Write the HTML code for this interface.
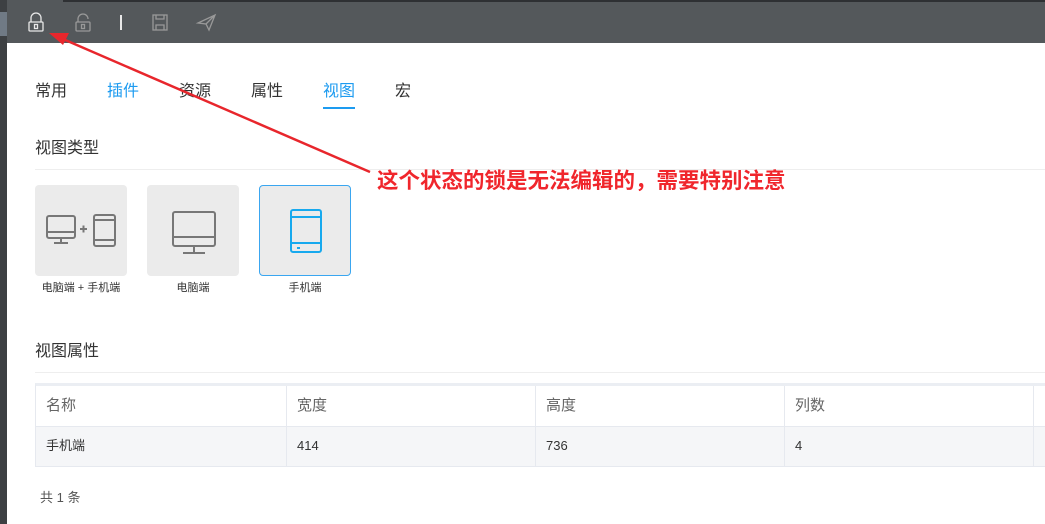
<!DOCTYPE html>
<html><head><meta charset="utf-8"><style>
*{margin:0;padding:0;box-sizing:border-box}
body{width:1045px;height:524px;overflow:hidden;background:#fff;font-family:"Liberation Sans","Noto Sans CJK SC",sans-serif;position:relative;color:#333}
.abs{position:absolute}
.tab{position:absolute;top:82px;font-size:16px;line-height:20px;color:#333}
.card{position:absolute;top:185px;width:92px;height:91px;background:#ebebeb;border-radius:4px}
.lbl{position:absolute;top:279px;font-size:11px;color:#333;width:120px;text-align:center}
.th,.td{position:absolute;font-size:15px;line-height:20px;color:#666}
.td{font-size:13px;color:#333}
</style></head><body>
<div class="abs" style="left:0;top:0;width:1045px;height:43px;background:#54585b"></div>
<div class="abs" style="left:63px;top:0;width:982px;height:2px;background:#2e3033"></div>
<div class="abs" style="left:0;top:0;width:7px;height:524px;background:#3d4043"></div>
<div class="abs" style="left:0;top:12px;width:7px;height:24px;background:#707a85"></div>
<svg class="abs" style="left:0;top:0" width="240" height="43" fill="none">
<g stroke="#e8e8e8" stroke-width="1.3"><path d="M31 22v-4a5 5 0 0 1 10 0v4"/><rect x="29" y="22" width="14" height="9" rx="1"/><rect x="34.5" y="24.5" width="3" height="4"/></g>
<g stroke="#999" stroke-width="1.3"><path d="M78 22v-3a5 5 0 0 1 10 0"/><rect x="76" y="22" width="14" height="9" rx="1"/><rect x="81.5" y="24.5" width="3" height="4"/>
<rect x="153" y="15" width="14" height="15"/><path d="M156 15v4h8v-4M156 30v-5h8v5"/><path d="M198 23l17-8-6 15-3-6z M206 24l9-9"/></g>
<rect x="120" y="15" width="2" height="15" fill="#e8e8e8"/>
</svg>
<div class="tab" style="left:35px">常用</div>
<div class="tab" style="left:107px;color:#1d9bf0">插件</div>
<div class="tab" style="left:179px">资源</div>
<div class="tab" style="left:251px">属性</div>
<div class="tab" style="left:323px;color:#1d9bf0">视图</div>
<div class="abs" style="left:323px;top:107px;width:32px;height:2px;background:#1d9bf0"></div>
<div class="tab" style="left:395px">宏</div>
<div class="abs" style="left:35px;top:139px;font-size:16px;line-height:20px">视图类型</div>
<div class="abs" style="left:35px;top:169px;width:1010px;height:1px;background:#eee"></div>
<div class="card" style="left:35px"></div>
<div class="card" style="left:147px"></div>
<div class="card" style="left:259px;border:1px solid #3aa6f0"></div>
<svg class="abs" style="left:35px;top:185px" width="320" height="91" fill="none" stroke-width="2">
<g stroke="#777"><rect x="12" y="31" width="28" height="22" rx="2"/><path d="M12 47h28M26 53v5M19 58h14M45 44h7M48.5 40.5v7"/><rect x="59" y="30" width="21" height="31" rx="2"/><path d="M59 35h21M59 55h21"/>
<rect x="138" y="27" width="42" height="34" rx="2"/><path d="M138 52h42M159 61v7M148 68h22"/></g>
<g stroke="#17a9ee"><rect x="256" y="25" width="30" height="42" rx="2"/><path d="M256 32h30M256 58h30M262 63h3"/></g>
</svg>
<div class="lbl" style="left:21px">电脑端 + 手机端</div>
<div class="lbl" style="left:133px">电脑端</div>
<div class="lbl" style="left:245px">手机端</div>
<div class="abs" style="left:35px;top:342px;font-size:16px;line-height:20px">视图属性</div>
<div class="abs" style="left:35px;top:372px;width:1010px;height:1px;background:#eee"></div>
<div class="abs" style="left:35px;top:383px;width:1010px;height:84px;border-top:3px solid #ebeef3;border-bottom:1px solid #e6e9ef;border-left:1px solid #e6e9ef"></div>
<div class="abs" style="left:36px;top:426px;width:1009px;height:40px;background:#f5f6f8;border-top:1px solid #e6e9ef"></div>
<div class="abs" style="left:286px;top:386px;width:1px;height:80px;background:#e6e9ef"></div>
<div class="abs" style="left:535px;top:386px;width:1px;height:80px;background:#e6e9ef"></div>
<div class="abs" style="left:784px;top:386px;width:1px;height:80px;background:#e6e9ef"></div>
<div class="abs" style="left:1033px;top:386px;width:1px;height:80px;background:#e6e9ef"></div>
<div class="th" style="left:46px;top:396px">名称</div>
<div class="th" style="left:297px;top:396px">宽度</div>
<div class="th" style="left:546px;top:396px">高度</div>
<div class="th" style="left:795px;top:396px">列数</div>
<div class="td" style="left:46px;top:436px">手机端</div>
<div class="td" style="left:297px;top:436px">414</div>
<div class="td" style="left:546px;top:436px">736</div>
<div class="td" style="left:795px;top:436px">4</div>
<div class="abs" style="left:40px;top:487px;font-size:13px;color:#555">共 1 条</div>
<svg class="abs" style="left:0;top:0" width="400" height="200"><path d="M370 172L56 36" stroke="#e8262c" stroke-width="2.5"/><path d="M49 33l20 0-6 12z" fill="#e8262c"/></svg>
<div class="abs" style="left:377px;top:168px;font-size:21.5px;line-height:26px;font-weight:bold;color:#f0262c;white-space:nowrap">这个状态的锁是无法编辑的，需要特别注意</div>
</body></html>
